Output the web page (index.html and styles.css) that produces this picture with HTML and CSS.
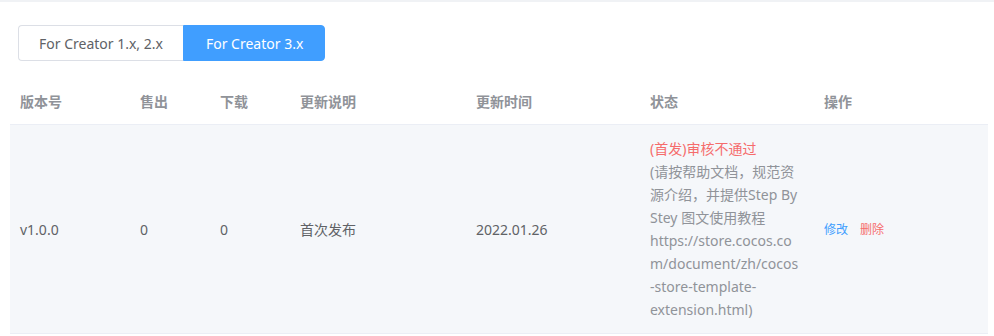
FILE: index.html
```html
<!DOCTYPE html>
<html lang="zh-CN">
<head>
<meta charset="utf-8">
<link rel="stylesheet" href="styles.css">
</head>
<body>
<div class="page">
  <div class="tabs">
    <button class="tab">For Creator 1.x, 2.x</button>
    <button class="tab active">For Creator 3.x</button>
  </div>
  <table class="versions">
    <colgroup>
      <col class="c1"><col class="c2"><col class="c3"><col class="c4"><col class="c5"><col class="c6"><col class="c7">
    </colgroup>
    <thead>
      <tr>
        <th>版本号</th><th>售出</th><th>下载</th><th>更新说明</th><th>更新时间</th><th>状态</th><th>操作</th>
      </tr>
    </thead>
    <tbody>
      <tr>
        <td>v1.0.0</td>
        <td>0</td>
        <td>0</td>
        <td>首次发布</td>
        <td>2022.01.26</td>
        <td class="status">
          <div class="fail">(首发)审核不通过</div>
          <div class="reason">(请按帮助文档，规范资源介绍，并提供Step By Stey 图文使用教程 https://store.cocos.com/document/zh/cocos-store-template-extension.html)</div>
        </td>
        <td class="ops"><a class="edit">修改</a><a class="del">删除</a></td>
      </tr>
    </tbody>
  </table>
</div>
</body>
</html>
```
FILE: styles.css
```css
html, body {
  margin: 0;
  padding: 0;
  background: #fff;
}
body {
  font-family: "Noto Sans", "Noto Sans CJK SC", sans-serif;
  font-size: 14px;
  color: #606266;
}
.page {
  border-top: 2px solid #f0f2f5;
  padding: 0 6px 0 10px;
}
.tabs {
  display: flex;
  margin: 23px 0 0 8px;
}
.tab {
  font-family: inherit;
  font-size: 14px;
  height: 36px;
  padding: 0 20px;
  border: 1px solid #dcdfe6;
  background: #fff;
  color: #606266;
  cursor: pointer;
}
.tab:first-child {
  border-radius: 4px 0 0 4px;
  border-right: none;
}
.tab:last-child {
  border-radius: 0 4px 4px 0;
}
.tab.active {
  background: #409eff;
  border-color: #409eff;
  color: #fff;
  padding: 0 21px 0 22px;
}
.versions {
  margin-top: 17px;
  width: 978px;
  border-collapse: collapse;
  table-layout: fixed;
}
.c1 { width: 120px; }
.c2 { width: 80px; }
.c3 { width: 80px; }
.c4 { width: 176px; }
.c5 { width: 174px; }
.c6 { width: 174px; }
.c7 { width: 174px; }
.versions th {
  text-align: left;
  font-weight: 700;
  color: #909399;
  padding: 12px 10px 11px;
  line-height: 23px;
  border-bottom: 1px solid #ebeef5;
}
.versions td {
  background: #f5f7fa;
  padding: 12px 10px;
  line-height: 23px;
  vertical-align: middle;
  border-bottom: 1px solid #ebeef5;
}
.status .fail {
  color: #f56c6c;
}
.status .reason {
  color: #909399;
  max-width: 150px;
  overflow-wrap: break-word;
}
.ops a {
  font-size: 12px;
  cursor: pointer;
}
.ops .edit {
  color: #409eff;
  margin-right: 12px;
}
.ops .del {
  color: #f56c6c;
}
```
